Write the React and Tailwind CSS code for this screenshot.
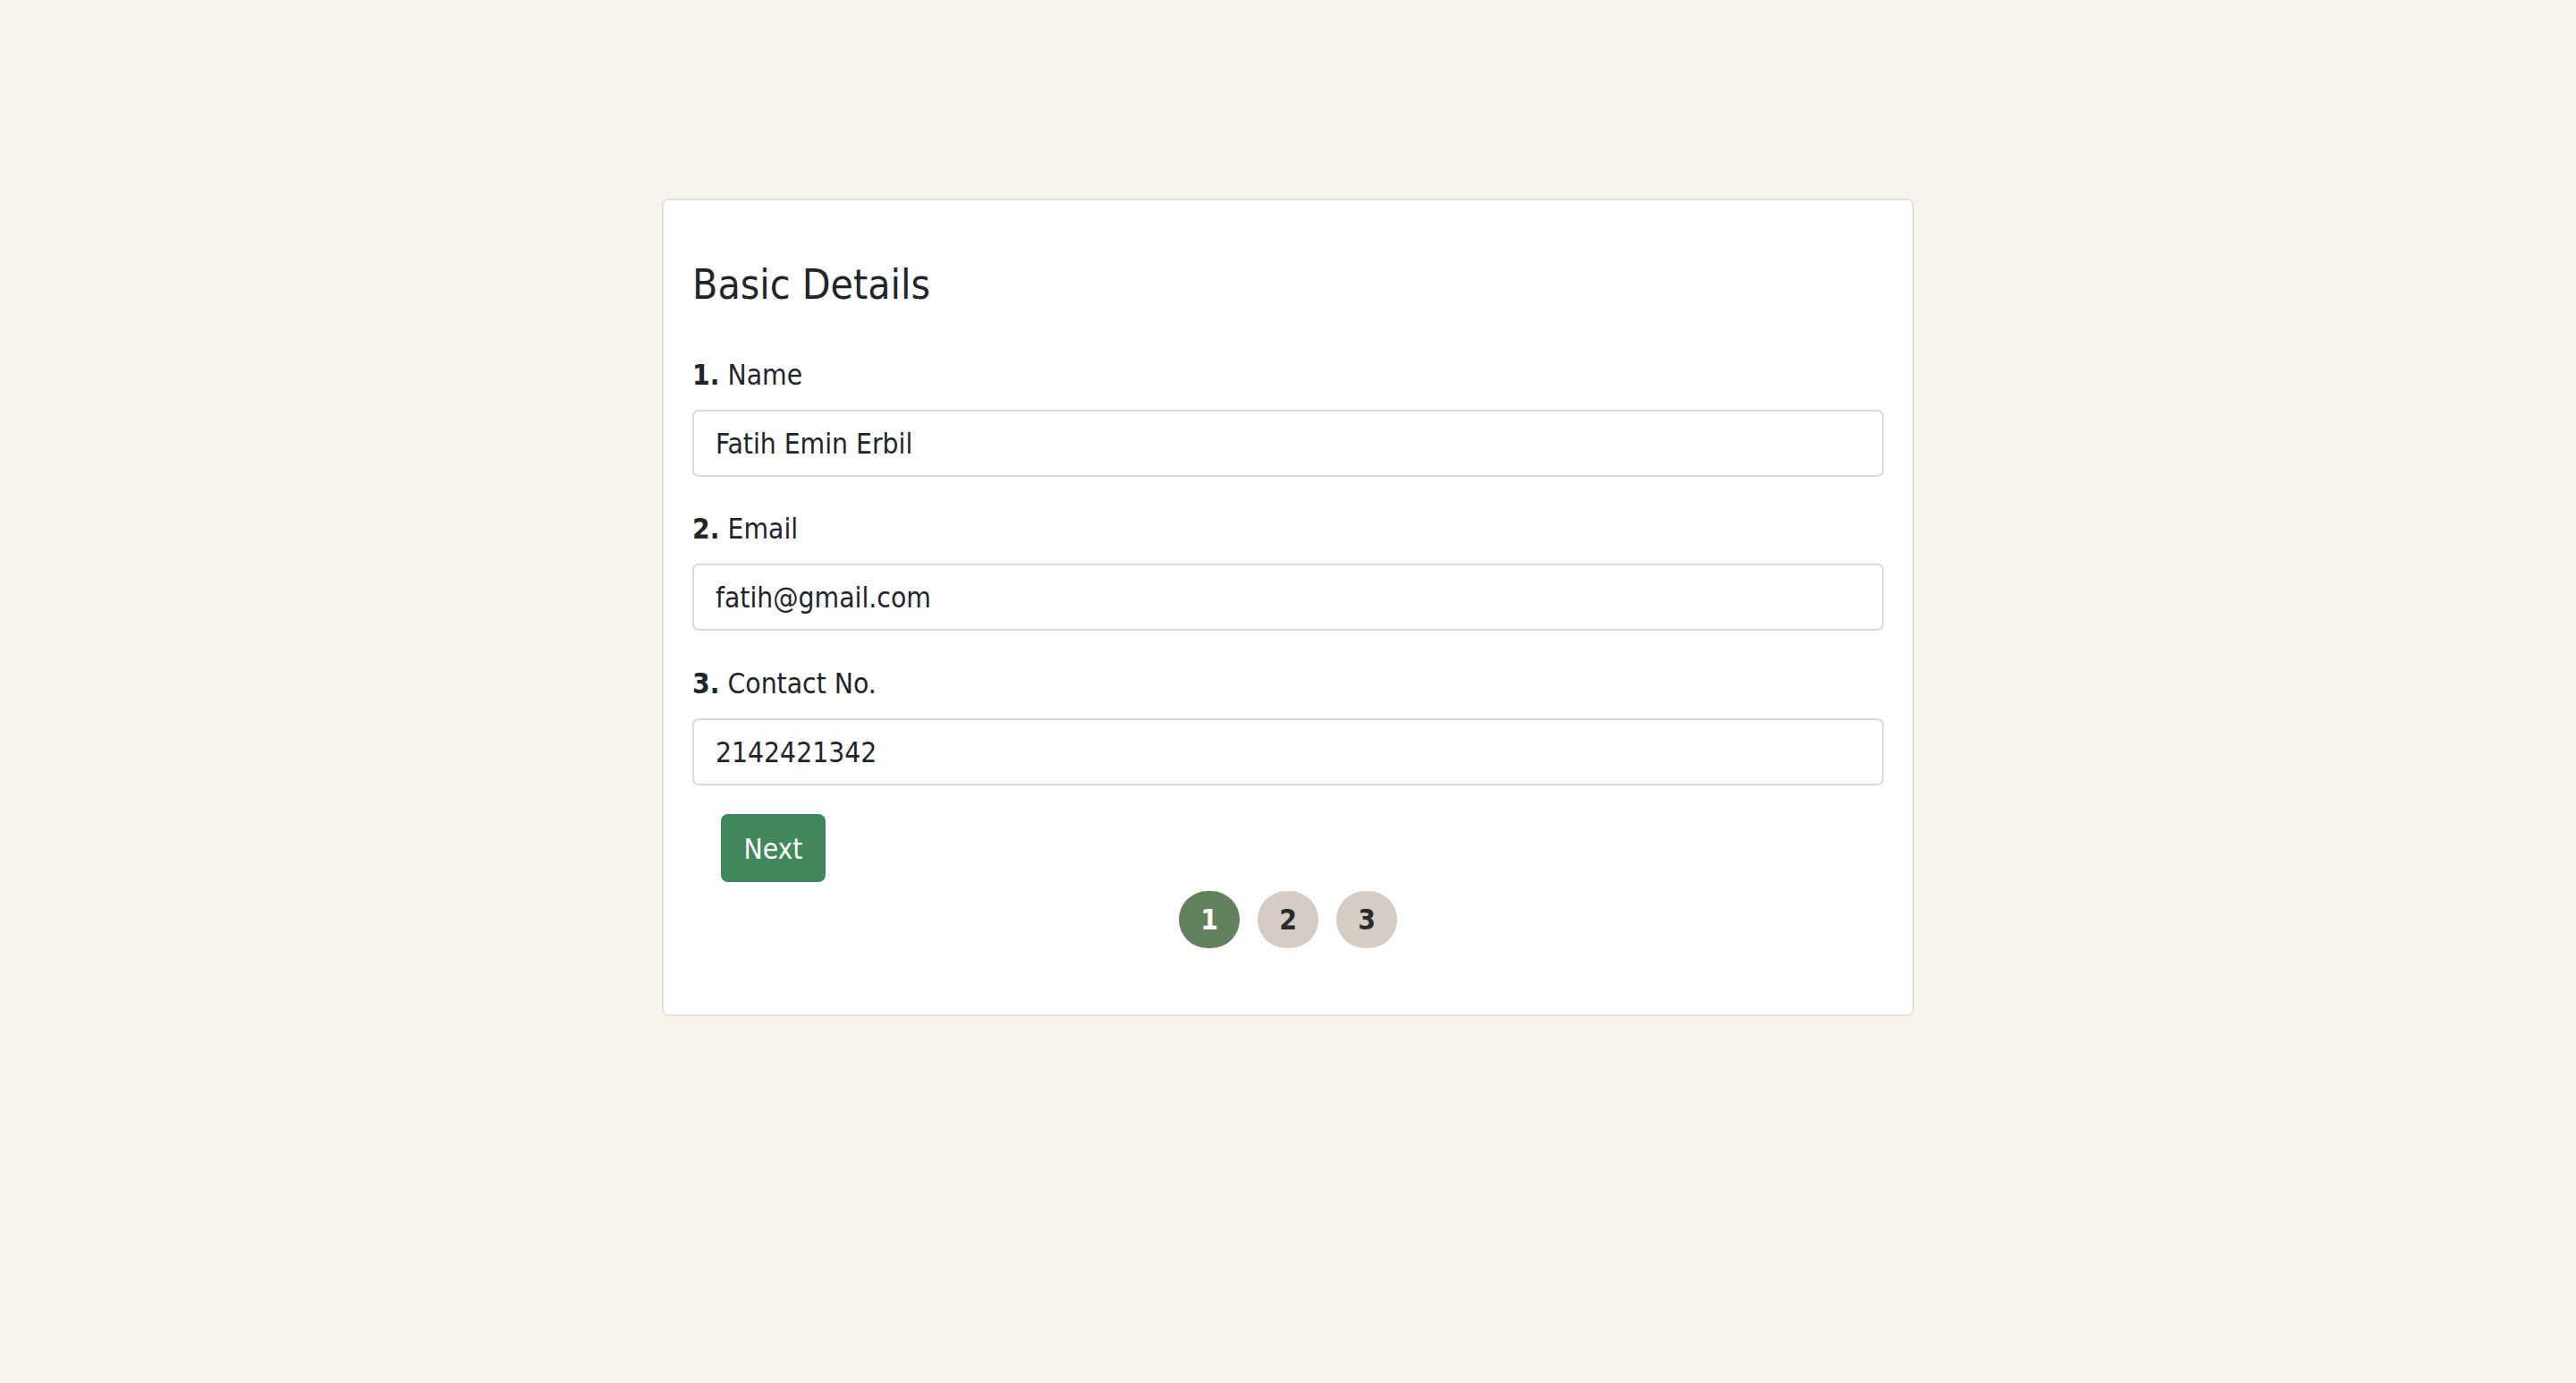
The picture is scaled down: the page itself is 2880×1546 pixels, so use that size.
import React from "react";

const fields = [
  { num: "1.", label: "Name", value: "Fatih Emin Erbil", gap: "mt-[48px]" },
  { num: "2.", label: "Email", value: "fatih@gmail.com", gap: "mt-[35px]" },
  { num: "3.", label: "Contact No.", value: "2142421342", gap: "mt-[36px]" },
];

const steps = [1, 2, 3];

const App = () => {
  return (
    <div
      className="min-h-screen bg-[#f7f4ed] pt-[222px] text-[#212529]"
      style={{ fontFamily: '"DejaVu Sans Condensed", "DejaVu Sans", sans-serif' }}
    >
      <div className="mx-auto w-[1400px] bg-white border-2 border-[#e0e0e0] rounded-[7px] px-[32px] pt-[64px] pb-[74px]">
        {/* Title */}
        <div className="h-[60px] flex items-center">
          <h3 className="text-[46px] leading-none font-normal">Basic Details</h3>
        </div>

        {/* Fields */}
        {fields.map((f) => (
          <div key={f.label} className={f.gap}>
            <div className="h-[48px] flex items-center">
              <label className="text-[31.5px] leading-none">
                <span className="font-bold">{f.num}</span> {f.label}
              </label>
            </div>
            <input
              className="mt-[14px] block w-full h-[75px] px-[24px] border-2 border-[#d6dadf] rounded-[7px] text-[31.5px] text-[#212529] bg-white outline-none"
              defaultValue={f.value}
              readOnly
            />
          </div>
        ))}

        {/* Next button */}
        <button className="mt-[32px] ml-[32px] w-[117px] h-[76px] pt-[3px] flex items-center justify-center bg-[#41875a] text-white text-[31.5px] leading-none rounded-[8px]">
          Next
        </button>

        {/* Step indicators */}
        <div className="mt-[10px] flex justify-center gap-[20px]">
          {steps.map((s) => (
            <div
              key={s}
              className={
                s === 1
                  ? "w-[68px] h-[64px] pt-[2px] rounded-full flex items-center justify-center bg-[#62805c] text-white text-[31.5px] font-bold leading-none"
                  : "w-[68px] h-[64px] pt-[2px] rounded-full flex items-center justify-center bg-[#d5ccc3] text-[#2b2b2b] text-[31.5px] font-bold leading-none"
              }
            >
              {s}
            </div>
          ))}
        </div>
      </div>
    </div>
  );
};

export default App;
